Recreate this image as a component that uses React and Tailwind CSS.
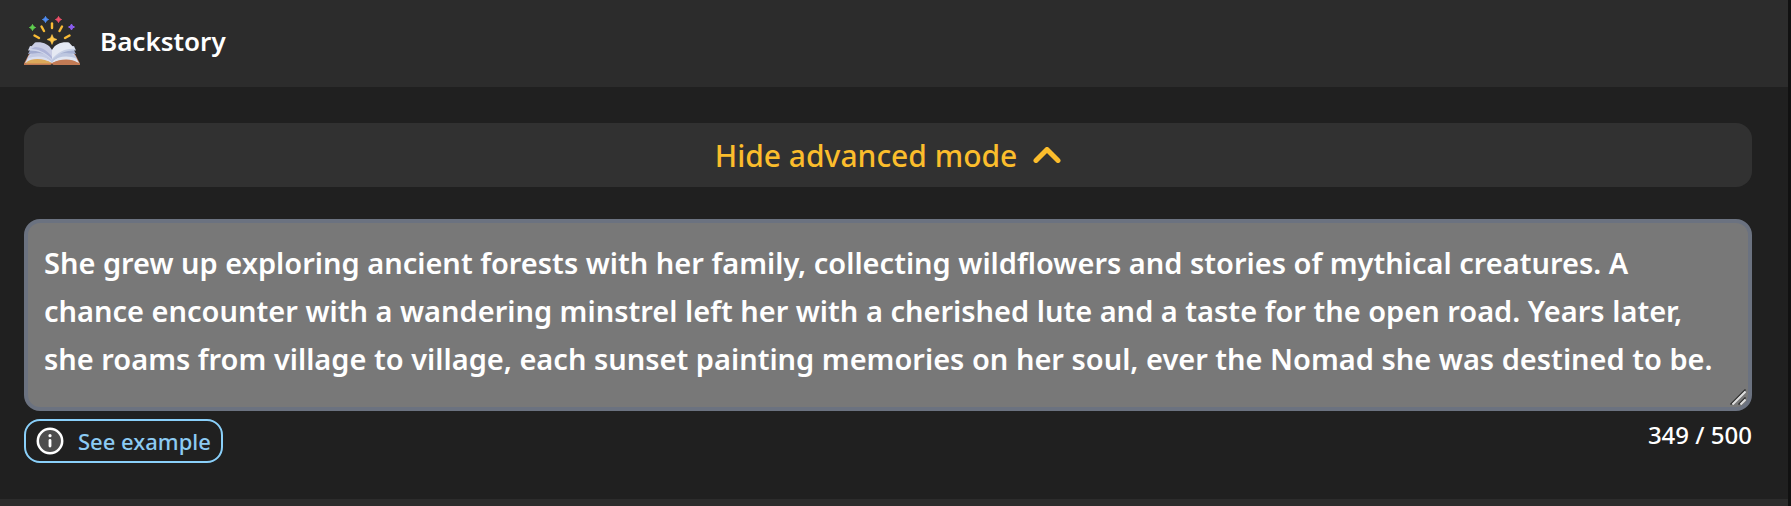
import { useState } from 'react'

const MAX_LENGTH = 500

const DEFAULT_BACKSTORY =
  'She grew up exploring ancient forests with her family, collecting wildflowers and stories of mythical creatures. A chance encounter with a wandering minstrel left her with a cherished lute and a taste for the open road. Years later, she roams from village to village, each sunset painting memories on her soul, ever the Nomad she was destined to be.'

const BookIcon = () => (
  <svg width="56" height="56" viewBox="0 1 56 56" aria-hidden="true">
    {/* Cover */}
    <path d="M0 51.500 5 42H51L56 51.500V53H29.500L28 52 26.500 53H0Z" fill="#c27b55" />
    <path d="M2 50.500C10 47.500 20 48 27 50.500L27 51.500H2Z" fill="#dba95a" />
    {/* Left pages */}
    <path d="M1 51 7 40 28 46V51C20 47.500 9 48 1 51Z" fill="#d9deef" />
    <path d="M2.500 50C8 46 20 46 27.500 51C20 48.500 9 48.500 2.500 51Z" fill="#dba95a" />
    <path d="M4 42 7 36 28 40V50C22 44 13 41 4 42Z" fill="#a3acd0" />
    <path d="M3 47C12 43 22 44 28 50V46C20 40 12 40 5 43Z" fill="#c3cae3" />
    <path d="M4 38.500 6 34 28 38V48C21 41 13 38 4 38.500Z" fill="#cfd5ea" />
    <path d="M11 30.500C18 29.500 25 32 28 38V47C22 40 14 36 5 37Z" fill="#c9cde5" />
    <path d="M11 35C18 35 24 39 28 45V47C21 40 14 37 7 37Z" fill="#aeb4d8" />
    {/* Right pages */}
    <path d="M55 51 49 40 28 46V51C36 47.500 47 48 55 51Z" fill="#e1e6f2" />
    <path d="M53.500 50.500C48 46.500 36 46.500 28.500 51L54 52Z" fill="#c27b55" />
    <path d="M52 42 49 36 28 40V50C34 44 43 41 52 42Z" fill="#a6b1d2" />
    <path d="M53 47C44 43 34 44 28 50V46C36 40 44 40 51 43Z" fill="#bdc7e0" />
    <path d="M52 38.500 50 34 28 38V48C35 41 43 38 52 38.500Z" fill="#c7d0e5" />
    <path d="M45 30.500C38 29.500 31 32 28 38V47C34 40 42 36 51 37Z" fill="#e5e9f3" />
    {/* Rays */}
    <g stroke="#f9bb35" strokeWidth="2.400" strokeLinecap="round">
      <path d="M28 11.500v4.500" />
      <path d="m17.500 14.500 2.500 4.500" />
      <path d="M38 14.500 35.500 19" />
      <path d="m10.500 23.500 4.500 2.500" />
      <path d="M45.500 23.500 41 26" />
    </g>
    {/* Sparkles */}
    <path d="m28 22.500 1.500 3.500 3.500 1.500-3.500 1.500L28 32.500 26.500 29 23 27.500l3.500-1.500Z" fill="#ffc84a" stroke="#ffc84a" strokeWidth="0.500" />
    <path d="m8.500 12.500 1 2 2 1-2 1-1 2-1-2-2-1 2-1Z" fill="#60d050" stroke="#60d050" />
    <path d="m21.500 4.500 1 2 2 1-2 1-1 2-1-2-2-1 2-1Z" fill="#4e8df5" stroke="#4e8df5" />
    <path d="m34.500 4.500 1 2 2 1-2 1-1 2-1-2-2-1 2-1Z" fill="#f0506a" stroke="#f0506a" />
    <path d="m47.500 12 1 2 2 1-2 1-1 2-1-2-2-1 2-1Z" fill="#8c5df0" stroke="#8c5df0" />
  </svg>
)

const ChevronUpIcon = () => (
  <svg width="28" height="16" viewBox="0 0 28 16" fill="none" aria-hidden="true">
    <path d="M3 13.500 14 2.500l11 11" stroke="#fbbd2c" strokeWidth="5" strokeLinecap="round" strokeLinejoin="round" />
  </svg>
)

const InfoIcon = () => (
  <svg width="28" height="28" viewBox="0 0 28 28" aria-hidden="true">
    <circle cx="14" cy="14" r="12.200" fill="#4d4d4d" stroke="#fff" strokeWidth="2.500" />
    <circle cx="14" cy="8.700" r="1.600" fill="#fff" />
    <path d="M14 13.500v5.500" stroke="#fff" strokeWidth="2.800" strokeLinecap="round" />
  </svg>
)

const ResizeGrip = () => (
  <svg
    width="16"
    height="16"
    viewBox="0 0 16 16"
    strokeWidth="1.500"
    className="pointer-events-none absolute right-1.5 bottom-1.5"
    aria-hidden="true"
  >
    <path d="M.5 15.500l15-15M8.500 15.500l7-7" stroke="#2b2b2b" />
    <path d="M2.500 15.500l13-13M10.500 15.500l5-5" stroke="#dedede" strokeWidth="2" />
  </svg>
)

const App = () => {
  const [open, setOpen] = useState(true)
  const [text, setText] = useState(DEFAULT_BACKSTORY)

  return (
    <div className="bg-[#111111] pr-[3px] font-['Noto_Sans',sans-serif] font-medium text-white">
      <section className="bg-[#202020]">
        <header className="flex h-[87px] items-center gap-5 bg-[#2c2c2c] px-6 pb-1.5">
          <BookIcon />
          <h2 className="text-[26px] leading-8 font-semibold">Backstory</h2>
        </header>

        <div className="pt-9 pr-9 pb-9 pl-6">
          <button
            type="button"
            aria-expanded={open}
            onClick={() => setOpen((v) => !v)}
            className="flex h-16 w-full items-center justify-center gap-4 rounded-2xl bg-[#313131] text-[30px] text-[#fbbd2c]"
          >
            Hide advanced mode
            <ChevronUpIcon />
          </button>

          {open && (
            <div className="pt-8">
              <div className="relative">
                <textarea
                  aria-label="Backstory"
                  rows={3}
                  maxLength={MAX_LENGTH}
                  value={text}
                  onChange={(e) => setText(e.target.value)}
                  className="block h-48 w-full resize-y overflow-hidden rounded-2xl border-4 border-[#6b7280] bg-[#787878] px-4 pt-4 pb-6 text-[29px] leading-[48px] font-semibold outline-none [&::-webkit-resizer]:hidden"
                />
                <ResizeGrip />
              </div>
              <div className="flex items-start justify-between pt-2">
                <button
                  type="button"
                  className="flex h-11 items-center gap-3.5 rounded-2xl border-2 border-[#8ad0fa] px-2.5 text-[22px] text-[#8ccbf3]"
                >
                  <InfoIcon />
                  See example
                </button>
                <span className="text-2xl">{text.length} / {MAX_LENGTH}</span>
              </div>
            </div>
          )}
        </div>
      </section>
      <div className="h-[7px] bg-[#2c2c2c]" />
    </div>
  )
}

export default App
